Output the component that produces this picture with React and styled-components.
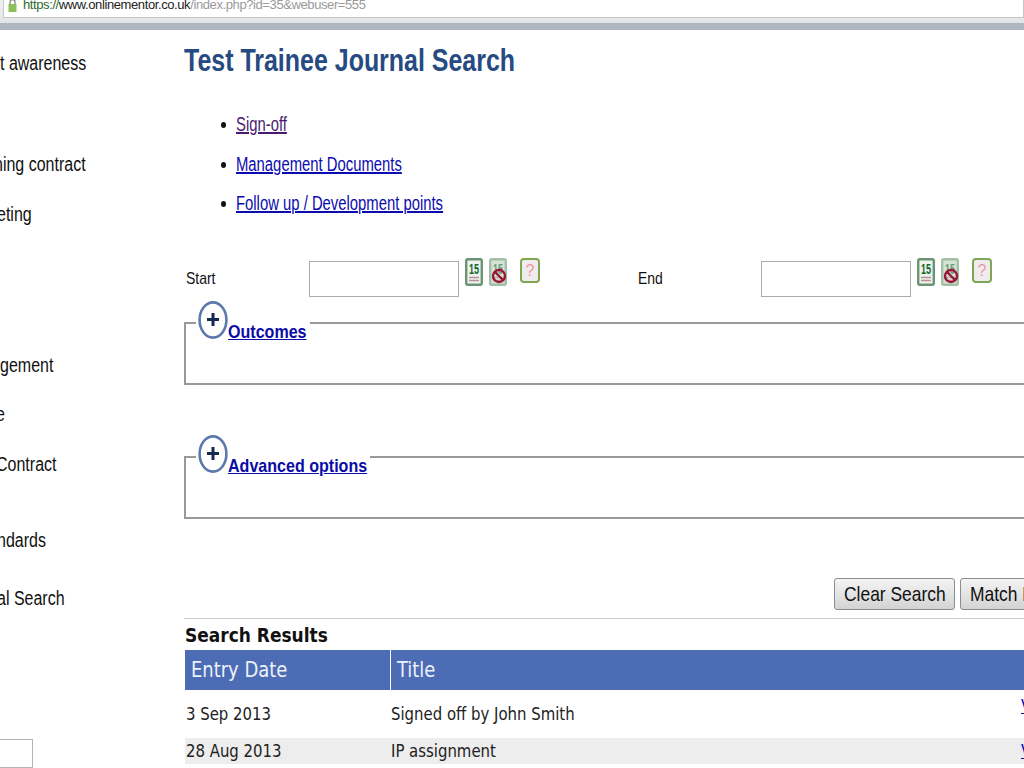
import React from 'react';
import styled, { createGlobalStyle, css } from 'styled-components';

const GlobalStyle = createGlobalStyle`
  html, body {
    margin: 0;
    padding: 0;
    height: 100%;
    overflow: hidden;
    background: #fff;
    font-family: "Liberation Sans", Arial, sans-serif;
  }
`;

const squeeze = (x) => css`
  display: inline-block;
  white-space: nowrap;
  transform: scaleX(${x});
  transform-origin: left center;
`;

const Page = styled.div`
  width: 1024px;
  height: 768px;
  overflow: hidden;
  display: flex;
  flex-direction: column;
`;

const BrowserBar = styled.header`
  flex: none;
  height: 30px;
  background: linear-gradient(#eef0f1 0, #e2e4e6 23px, #aeb7c1 23px);
`;

const AddressField = styled.div`
  height: 18px;
  margin-left: 3px;
  padding-left: 4px;
  display: flex;
  align-items: center;
  gap: 6px;
  background: #fff;
  border: 1px solid #c4c6c8;
  border-top: 0;
  box-sizing: border-box;
  overflow: hidden;
`;

const LockSvg = styled.svg`
  flex: none;
  margin-top: -6px;
`;

const Url = styled.span`
  font-size: 13px;
  line-height: 14px;
  margin-top: -7px;
  letter-spacing: -0.4px;
  color: #9a9a9a;
  white-space: nowrap;
  b { font-weight: 400; color: #2d6a2d; }
  i { font-style: normal; color: #222; }
`;

const Columns = styled.div`
  flex: 1;
  display: flex;
  min-height: 0;
`;

const Sidebar = styled.nav`
  flex: none;
  width: 184px;
  display: flex;
  flex-direction: column;
  overflow: hidden;
`;

const SideItem = styled.div`
  height: 22px;
  line-height: 22px;
  margin-top: ${(p) => p.$top}px;
  margin-left: ${(p) => p.$shift || 0}px;
  font-size: 20px;
  color: #111;
  ${squeeze(0.8)}
`;

const SideBox = styled.div`
  width: 32px;
  height: 40px;
  margin-top: 130px;
  border: 1px solid #b5b5b5;
  border-left: 0;
`;

const Main = styled.main`
  flex: none;
  width: 900px;
`;

const Title = styled.h1`
  margin: 12px 0 0;
  height: 36px;
  line-height: 36px;
  font-size: 32px;
  font-weight: 700;
  color: #264a82;
  ${squeeze(0.78)}
`;

const LinkList = styled.ul`
  margin: 35px 0 0;
  padding: 0 0 0 37px;
  list-style: none;
`;

const LinkItem = styled.li`
  height: 39.5px;
  display: flex;
  align-items: flex-start;
  gap: 10px;
  line-height: 22px;
  font-size: 20px;
  &::before {
    content: '';
    flex: none;
    width: 5px;
    height: 6px;
    margin-top: 9px;
    border-radius: 50%;
    background: #111;
  }
`;

const PlainLink = styled.a`
  color: ${(p) => (p.$visited ? '#4a1a70' : '#0b0bb0')};
  text-decoration: underline;
  ${squeeze(0.742)}
`;

const DateRow = styled.div`
  display: flex;
  margin-top: 29px;
`;

const DateField = styled.div`
  width: 452px;
  flex: none;
  display: flex;
  align-items: flex-start;
`;

const DateLabel = styled.label`
  width: 123px;
  padding-left: 2px;
  flex: none;
  height: 36px;
  line-height: 36px;
  font-size: 17px;
  color: #111;
  span { ${squeeze(0.82)} }
`;

const DateInput = styled.input`
  width: 150px;
  height: 36px;
  box-sizing: border-box;
  flex: none;
  border: 1px solid #ababab;
  background: #fff;
  padding: 0;
`;

const IconRow = styled.div`
  display: flex;
  align-items: flex-start;
  margin: -3px 0 0 6px;
`;

const IconWrap = styled.span`
  display: block;
  height: 28px;
  margin-left: ${(p) => p.$gap || 0}px;
`;

const Group = styled.fieldset`
  margin: ${(p) => p.$top}px 0 0;
  padding: 0;
  height: 80px;
  box-sizing: border-box;
  border: 2px solid #999;
  min-inline-size: 0;
`;

const GroupLegend = styled.legend`
  margin-left: 10px;
  padding: 0 2px;
  width: ${(p) => p.$width}px;
  box-sizing: border-box;
  height: 37px;
  display: flex;
  align-items: flex-start;
`;

const PlusSvg = styled.svg`
  flex: none;
  margin-top: -4px;
`;

const GroupLink = styled.a`
  margin-top: 16px;
  font-size: 19px;
  line-height: 22px;
  font-weight: 700;
  color: #0b0ba8;
  text-decoration: underline;
  ${squeeze(0.845)}
`;

const Actions = styled.div`
  display: flex;
  gap: 5px;
  margin: 59px 0 0 650px;
`;

const ActionButton = styled.button`
  flex: none;
  height: 32px;
  padding: 0 9px;
  width: 121px;
  border: 1px solid #8c8c8c;
  border-radius: 3px;
  background: linear-gradient(#f4f4f4, #d3d3d3);
  color: #111;
  font-family: inherit;
  font-size: 21px;
  white-space: nowrap;
  overflow: hidden;
  text-align: left;
  span { ${squeeze(0.83)} }
`;

const Results = styled.section`
  margin-top: 8px;
  border-top: 1px solid #ccc;
  font-family: "DejaVu Sans Condensed", "DejaVu Sans", sans-serif;
`;

const ResultsHeading = styled.h2`
  margin: 3px 0 0 1px;
  height: 28px;
  line-height: 26px;
  font-size: 20px;
  font-weight: 700;
  color: #111;
  ${squeeze(0.946)}
`;

const Table = styled.table`
  display: block;
  margin-left: 1px;
  border-collapse: collapse;
  table-layout: fixed;
  width: 900px;
`;

const HeadCell = styled.th`
  height: 40px;
  padding: 0 0 0 6px;
  width: ${(p) => p.$width}px;
  box-sizing: border-box;
  background: #4c6cb5;
  color: #eef2fa;
  font-size: 21px;
  font-weight: 400;
  text-align: left;
  border-right: ${(p) => (p.$divider ? '1px solid #fff' : '0')};
  white-space: nowrap;
`;

const HeadLabel = styled.span`
  ${squeeze(0.95)}
`;

const Row = styled.tr`
  background: ${(p) => (p.$shaded ? '#ededed' : '#fff')};
`;

const Cell = styled.td`
  height: ${(p) => (p.$shaded ? 26 : 48)}px;
  padding: 0 0 0 ${(p) => p.$pad}px;
  box-sizing: border-box;
  font-size: 17px;
  color: #222;
  white-space: nowrap;
  span { ${squeeze(0.975)} }
`;

const ViewLink = styled.a`
  color: #0b0bb0;
  text-decoration: underline;
  font-size: 17px;
  position: relative;
  top: ${(p) => p.$lift}px;
`;

const CalendarIcon = ({ faded }) => (
  <svg width="18" height="28" viewBox="0 0 18 28">
    <rect x="1.2" y="1.2" width="15.6" height="25.6" rx="1.5" fill={faded ? '#d6e4d6' : '#eef3ee'} stroke={faded ? '#a3bfa6' : '#6a9474'} strokeWidth="2.4" />
    <text x="9" y="16" textAnchor="middle" fontSize="15" fontWeight="700" textLength="10" lengthAdjust="spacingAndGlyphs" fontFamily="Liberation Sans" fill={faded ? '#6f9a78' : '#0f6a2a'}>15</text>
    <path d="M4 19.5h10M4 22.5h10" stroke={faded ? '#b9a9a9' : '#b99096'} strokeWidth="1.6" />
    {faded && (
      <g fill="none" stroke="#9a1636" strokeWidth="2.4">
        <circle cx="10" cy="18" r="6" />
        <path d="M6 14l8 8" />
      </g>
    )}
  </svg>
);

const HelpIcon = () => (
  <svg width="20" height="25" viewBox="0 0 20 25">
    <rect x="1" y="1" width="18" height="23" rx="3" fill="#f0ecee" stroke="#7fa653" strokeWidth="2" />
    <text x="10" y="18" textAnchor="middle" fontSize="16" fontFamily="Liberation Sans" fill="#e79aa6">?</text>
  </svg>
);

const PlusIcon = () => (
  <PlusSvg width="30" height="38" viewBox="0 0 30 38">
    <ellipse cx="15" cy="19" rx="13.4" ry="17.6" fill="#fff" stroke="#5b79ad" strokeWidth="2.6" />
    <path d="M15 12v13M9 18.5h12" stroke="#13294f" strokeWidth="3" />
  </PlusSvg>
);

const LockIcon = () => (
  <LockSvg width="9" height="13" viewBox="0 0 9 13">
    <path d="M2 5V3a2.5 2.5 0 0 1 5 0v2" fill="none" stroke="#8a8a7a" strokeWidth="1.3" />
    <rect x="0.5" y="5" width="8" height="8" fill="#8dbf5a" />
  </LockSvg>
);

const DateGroup = ({ label }) => (
  <DateField>
    <DateLabel><span>{label}</span></DateLabel>
    <DateInput />
    <IconRow>
      <IconWrap><CalendarIcon /></IconWrap>
      <IconWrap $gap={6}><CalendarIcon faded /></IconWrap>
      <IconWrap $gap={13}><HelpIcon /></IconWrap>
    </IconRow>
  </DateField>
);

const sideItems = [
  { text: 't awareness', top: 22 },
  { text: 'ning contract', top: 79, shift: -6 },
  { text: 'eting', top: 28, shift: -3 },
  { text: 'gement', top: 129 },
  { text: 'e', top: 27, shift: -4 },
  { text: 'Contract', top: 28, shift: -4 },
  { text: 'ndards', top: 54, shift: -3 },
  { text: 'al Search', top: 36, shift: -3 },
];

const App = () => (
  <Page>
    <GlobalStyle />
    <BrowserBar>
      <AddressField>
        <LockIcon />
        <Url><b>https://</b><i>www.onlinementor.co.uk</i>/index.php?id=35&amp;webuser=555</Url>
      </AddressField>
    </BrowserBar>
    <Columns>
      <Sidebar>
        {sideItems.map((item) => (
          <SideItem key={item.text} $top={item.top} $shift={item.shift}>{item.text}</SideItem>
        ))}
        <SideBox />
      </Sidebar>
      <Main>
        <Title>Test Trainee Journal Search</Title>
        <LinkList>
          <LinkItem><PlainLink href="#" $visited>Sign-off</PlainLink></LinkItem>
          <LinkItem><PlainLink href="#">Management Documents</PlainLink></LinkItem>
          <LinkItem><PlainLink href="#">Follow up / Development points</PlainLink></LinkItem>
        </LinkList>
        <DateRow>
          <DateGroup label="Start" />
          <DateGroup label="End" />
        </DateRow>
        <Group $top={8}>
          <GroupLegend $width={114}><PlusIcon /><GroupLink href="#">Outcomes</GroupLink></GroupLegend>
        </Group>
        <Group $top={54}>
          <GroupLegend $width={174}><PlusIcon /><GroupLink href="#">Advanced options</GroupLink></GroupLegend>
        </Group>
        <Actions>
          <ActionButton><span>Clear Search</span></ActionButton>
          <ActionButton><span>Match Entries</span></ActionButton>
        </Actions>
        <Results>
          <ResultsHeading>Search Results</ResultsHeading>
          <Table>
            <thead>
              <tr>
                <HeadCell $width={205} $divider><HeadLabel>Entry Date</HeadLabel></HeadCell>
                <HeadCell $width={631}><HeadLabel>Title</HeadLabel></HeadCell>
                <HeadCell $width={64} />
              </tr>
            </thead>
            <tbody>
              <Row>
                <Cell $pad={1}><span>3 Sep 2013</span></Cell>
                <Cell $pad={1}><span>Signed off by John Smith</span></Cell>
                <Cell $pad={0}><ViewLink href="#" $lift={-8}>View</ViewLink></Cell>
              </Row>
              <Row $shaded>
                <Cell $shaded $pad={1}><span>28 Aug 2013</span></Cell>
                <Cell $shaded $pad={1}><span>IP assignment</span></Cell>
                <Cell $shaded $pad={0}><ViewLink href="#" $lift={0}>View</ViewLink></Cell>
              </Row>
            </tbody>
          </Table>
        </Results>
      </Main>
    </Columns>
  </Page>
);

export default App;
